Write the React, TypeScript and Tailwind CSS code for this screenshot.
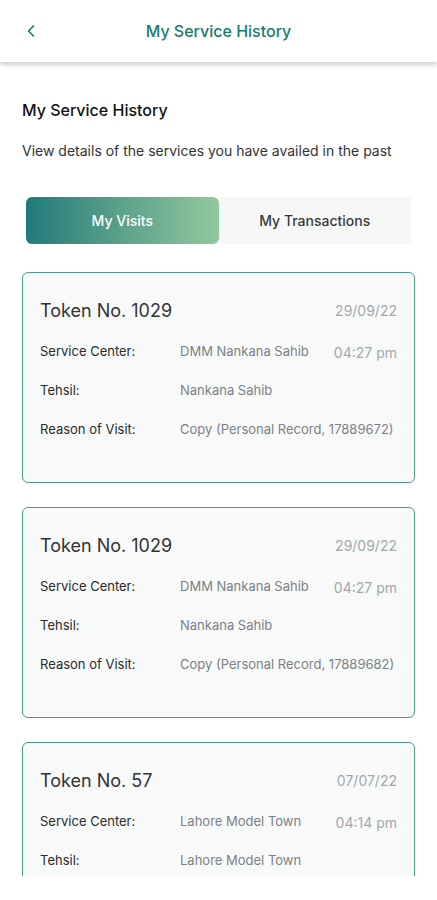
import { ChevronLeft } from 'lucide-react';

const visits = [
  { token: '1029', date: '29/09/22', center: 'DMM Nankana Sahib', time: '04:27 pm', tehsil: 'Nankana Sahib', reason: 'Copy (Personal Record, 17889672)' },
  { token: '1029', date: '29/09/22', center: 'DMM Nankana Sahib', time: '04:27 pm', tehsil: 'Nankana Sahib', reason: 'Copy (Personal Record, 17889682)' },
  { token: '57', date: '07/07/22', center: 'Lahore Model Town', time: '04:14 pm', tehsil: 'Lahore Model Town' },
];

function VisitCard({ v }: { v: any }) {
  return (
    <div className="h-[211px] shrink-0 rounded-md border-[1.5px] border-[#4f9791] bg-[#f8fafa] pl-[17px] pr-[17px] pt-[24px]">
      <div className="flex items-center justify-between">
        <span className="text-[18px] text-[#333333]">Token No. {v.token}</span>
        <span className="text-[14px] text-[#a3a8aa]">{v.date}</span>
      </div>
      <div className="mt-[15px] flex h-[26px] items-center text-[13px]">
        <span className="w-[140px] text-[#2a2a2a]">Service Center:</span>
        <span className="flex-1 text-[#7c8084]">{v.center}</span>
        <span className="text-[14px] text-[#a3a8aa]">{v.time}</span>
      </div>
      <div className="mt-[13px] flex h-[26px] items-center text-[13px]">
        <span className="w-[140px] text-[#2a2a2a]">Tehsil:</span>
        <span className="flex-1 text-[#7c8084]">{v.tehsil}</span>
      </div>
      {v.reason && (
        <div className="mt-[13px] flex h-[26px] items-center text-[13px]">
          <span className="w-[140px] text-[#2a2a2a]">Reason of Visit:</span>
          <span className="flex-1 text-[#7c8084]">{v.reason}</span>
        </div>
      )}
    </div>
  );
}

export default function App() {
  return (
    <div className="flex h-[900px] w-[437px] flex-col overflow-hidden bg-white font-['Inter',sans-serif]">
      <header className="relative z-10 flex h-[62px] shrink-0 items-center justify-center bg-white shadow-[0_3px_4px_rgba(0,0,0,0.18)]">
        <ChevronLeft className="absolute left-[21px] h-[20px] w-[20px] text-[#1b7a6e]" strokeWidth={2} />
        <h1 className="text-[16px] font-medium text-[#1b7a6e]">My Service History</h1>
      </header>
      <div className="h-[814px] shrink-0 overflow-hidden px-[22px]">
        <h2 className="mt-[36px] text-[16px] font-medium leading-[24px] text-[#111111]">My Service History</h2>
        <p className="mt-[19px] text-[14px] leading-[20px] text-[#333333]">View details of the services you have availed in the past</p>
        <div className="mt-[36px] flex h-[47px] px-[4px]">
          <div className="flex flex-1 items-center justify-center rounded-md bg-gradient-to-r from-[#1e7b78] to-[#91c99d] text-[14px] font-medium text-white">My Visits</div>
          <div className="flex flex-1 items-center justify-center bg-[#f6f8f8] text-[14px] font-medium text-[#3a3a3a]">My Transactions</div>
        </div>
        <div className="mt-[28px] flex flex-col gap-[24px]">
          {visits.map((v, i) => (
            <VisitCard key={i} v={v} />
          ))}
        </div>
      </div>
    </div>
  );
}
